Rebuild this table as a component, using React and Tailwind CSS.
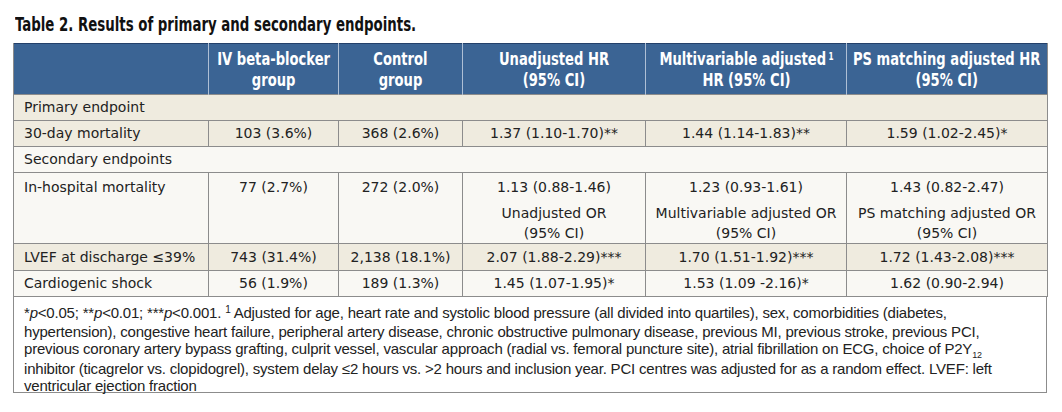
import React from 'react';

const narrow = { fontFamily: '"DejaVu Sans Condensed", "Liberation Sans", sans-serif' };
const body = { fontFamily: '"DejaVu Sans", "Liberation Sans", sans-serif' };

const rows = [
  { type: 'section', label: 'Primary endpoint', bg: 'bg-[#efebdf]' },
  { label: '30-day mortality', cells: ['103 (3.6%)', '368 (2.6%)', '1.37 (1.10-1.70)**', '1.44 (1.14-1.83)**', '1.59 (1.02-2.45)*'], bg: 'bg-[#efebdf]', h: 'h-[26px]' },
  { type: 'section', label: 'Secondary endpoints', bg: 'bg-[#f9f8f4]' },
  { label: 'In-hospital mortality', cells: ['77 (2.7%)', '272 (2.0%)', '1.13 (0.88-1.46)', '1.23 (0.93-1.61)', '1.43 (0.82-2.47)'], sub: ['Unadjusted OR', 'Multivariable adjusted OR', 'PS matching adjusted OR'], bg: 'bg-[#f9f8f4]', h: 'h-[71px]' },
  { label: 'LVEF at discharge ≤39%', cells: ['743 (31.4%)', '2,138 (18.1%)', '2.07 (1.88-2.29)***', '1.70 (1.51-1.92)***', '1.72 (1.43-2.08)***'], bg: 'bg-[#efebdf]', h: 'h-[27px]' },
  { label: 'Cardiogenic shock', cells: ['56 (1.9%)', '189 (1.3%)', '1.45 (1.07-1.95)*', '1.53 (1.09 -2.16)*', '1.62 (0.90-2.94)'], bg: 'bg-[#f9f8f4]', h: 'h-[26px]' },
];

// condensed header label, squeezed to match the narrow typeface
const HeadLabel = ({ children }) => (
  <div className="flex justify-center">
    <span className="inline-block whitespace-nowrap text-center scale-x-[0.81]">{children}</span>
  </div>
);

const App = () => {
  return (
    <div className="w-[1062px] h-[412px] bg-white pt-[13px] overflow-hidden">
      <h2 className="ml-[15px] h-[23px] mb-[7px] text-[19px] font-bold text-[#111] leading-[23px]" style={narrow}>
        <span className="inline-block whitespace-nowrap origin-left scale-x-[0.78]">
          Table 2. Results of primary and secondary endpoints.
        </span>
      </h2>

      <table className="ml-[13px] w-[1034px] border-collapse table-fixed text-[#222]" style={body}>
        <colgroup>
          <col className="w-[195px]" />
          <col className="w-[130px]" />
          <col className="w-[124px]" />
          <col className="w-[183px]" />
          <col className="w-[201px]" />
          <col className="w-[201px]" />
        </colgroup>
        <thead>
          <tr className="h-[51px] bg-[#3b6494] text-white text-[18px] leading-[21px] font-bold border-t border-t-[#23406a]" style={narrow}>
            <th className="border-l border-l-[#8c8c8c]"></th>
            <th className="border-l border-l-[#aebfd5] font-bold"><HeadLabel>IV beta-blocker<br />group</HeadLabel></th>
            <th className="border-l border-l-[#aebfd5] font-bold"><HeadLabel>Control<br />group</HeadLabel></th>
            <th className="border-l border-l-[#aebfd5] font-bold"><HeadLabel>Unadjusted HR<br />(95% CI)</HeadLabel></th>
            <th className="border-l border-l-[#aebfd5] font-bold">
              <HeadLabel>Multivariable adjusted<sup className="text-[10px] ml-[3px]">1</sup><br />HR (95% CI)</HeadLabel>
            </th>
            <th className="border-l border-l-[#aebfd5] border-r border-r-[#8c8c8c] font-bold">
              <HeadLabel>PS matching adjusted HR<br />(95% CI)</HeadLabel>
            </th>
          </tr>
        </thead>
        <tbody className="text-[14px]">
          {rows.map((r, i) =>
            r.type === 'section' ? (
              <tr key={i} className={`h-[26px] ${r.bg}`}>
                <td colSpan={6} className="pl-[10px] border border-[#8c8c8c] whitespace-nowrap">{r.label}</td>
              </tr>
            ) : (
              <tr key={i} className={`${r.h} ${r.bg}`}>
                <td className={`pl-[10px] border border-[#8c8c8c] whitespace-nowrap ${r.sub ? 'align-top pt-[4px]' : ''}`}>{r.label}</td>
                {r.cells.map((c, j) => (
                  <td key={j} className={`text-center border border-[#8c8c8c] whitespace-nowrap ${r.sub ? 'align-top pt-[4px]' : ''}`}>
                    {c}
                    {r.sub && j >= 2 && (
                      <div className="mt-[5px] leading-[20px]">
                        {r.sub[j - 2]}<br />(95% CI)
                      </div>
                    )}
                  </td>
                ))}
              </tr>
            )
          )}
        </tbody>
      </table>

      <div
        className="ml-[13px] w-[1034px] h-[96px] border-x border-b border-[#8c8c8c] px-[10px] pt-[7px] text-[15px] leading-[17px] tracking-[-0.2px] text-[#222] whitespace-nowrap"
        style={{ fontFamily: '"Liberation Sans", Arial, sans-serif' }}
      >
        *<i>p</i>&lt;0.05; **<i>p</i>&lt;0.01; ***<i>p</i>&lt;0.001. <span className="relative -top-[5px] text-[10px]">1</span> Adjusted for age, heart rate and systolic blood pressure (all divided into quartiles), sex, comorbidities (diabetes,<br />
        hypertension), congestive heart failure, peripheral artery disease, chronic obstructive pulmonary disease, previous MI, previous stroke, previous PCI,<br />
        previous coronary artery bypass grafting, culprit vessel, vascular approach (radial vs. femoral puncture site), atrial fibrillation on ECG, choice of P2Y<span className="relative top-[4px] text-[9px]">12</span><br />
        inhibitor (ticagrelor vs. clopidogrel), system delay ≤2 hours vs. &gt;2 hours and inclusion year. PCI centres was adjusted for as a random effect. LVEF: left<br />
        ventricular ejection fraction
      </div>
    </div>
  );
};

export default App;
